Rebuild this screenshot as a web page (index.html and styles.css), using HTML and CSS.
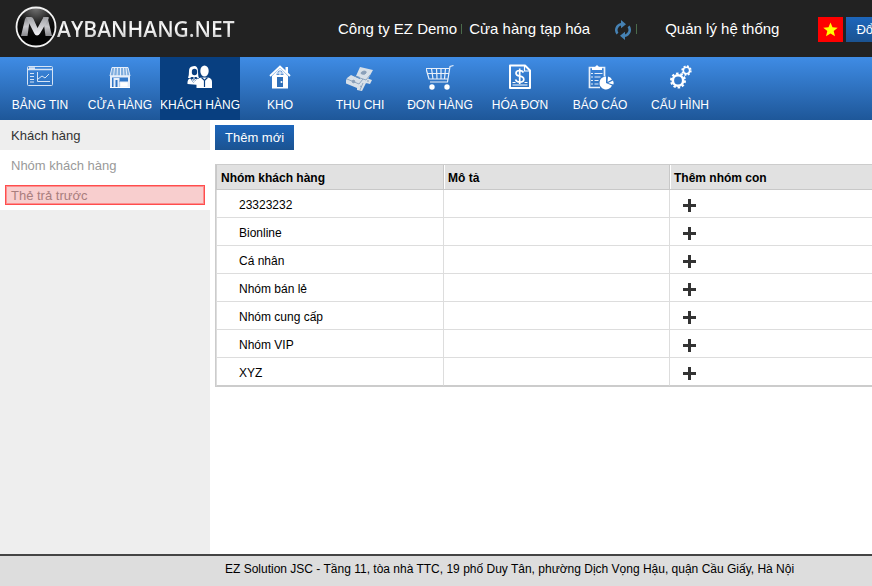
FILE: index.html
```html
<!DOCTYPE html>
<html lang="vi">
<head>
<meta charset="utf-8">
<title>Maybanhang.net - Nhóm khách hàng</title>
<link rel="stylesheet" href="styles.css">
</head>
<body>
<header class="topbar">
  <a class="logo" href="#">
    <svg class="logo-mark" viewBox="0 0 42 42" aria-hidden="true">
      <defs>
        <linearGradient id="silver" x1="0" y1="0" x2="0" y2="1"><stop offset="0" stop-color="#85868a"/><stop offset=".5" stop-color="#c8c8cc"/><stop offset="1" stop-color="#8a8a8e"/></linearGradient>
        <linearGradient id="shine" x1="0" y1="0" x2="0" y2="1"><stop offset="0" stop-color="#a0a1a5"/><stop offset="1" stop-color="#f4f4f8"/></linearGradient>
        <radialGradient id="ball" cx=".5" cy="0" r=".75"><stop offset="0" stop-color="#777"/><stop offset=".6" stop-color="#161616"/><stop offset="1" stop-color="#050505"/></radialGradient>
      </defs>
      <circle cx="21" cy="21" r="19.500" fill="url(#ball)" stroke="#f2f2f2" stroke-width="1.800"/>
      <path d="M6 30 10 13q.5-2 3-2h3l-2 8-1.500 11zM37 30 33 13q-.5-2-3-2h-2l1 8 1.500 11z" fill="url(#silver)"/>
      <path d="M11 11h5q1.500 0 2.500 2l4 9 5-9q1-2 2.500-2h3q1.500 0 .5 2l-8.500 14.500q-1.200 2-3 2-1.700 0-2.700-2z" fill="url(#shine)"/>
    </svg>
    <span class="logo-text">AYBANHANG.NET</span>
  </a>
  <nav class="topnav">
    <a href="#">Công ty EZ Demo</a>
    <span class="bar"></span>
    <a href="#">Cửa hàng tạp hóa</a>
    <button class="refresh" type="button" aria-label="Tải lại">
      <svg viewBox="0 0 18 20" aria-hidden="true" fill="#4682b4"><path d="M3 14.500A7.200 7.200 0 0 1 7.500 3V0l5 4.300-5 4V5.500a4.700 4.700 0 0 0-2.600 7.200Z" transform="translate(-.5 0)"/><path d="M15 5.500A7.200 7.200 0 0 1 10.500 17v3l-5-4.300 5-4v2.800a4.700 4.700 0 0 0 2.600-7.200Z" transform="translate(.5 0)"/></svg>
    </button>
    <span class="bar"></span>
    <a class="admin" href="#">Quản lý hệ thống</a>
    <a class="flag" href="#" aria-label="Tiếng Việt"><svg viewBox="0 0 25 25" aria-hidden="true"><path fill="#ff0" d="m12.500 5.500 2 4.800 5.200.4-4 3.400 1.300 5.100-4.500-2.800L8 19.200l1.300-5.100-4-3.400 5.200-.4z"/></svg></a>
    <button class="btn" type="button">Đổi mật khẩu</button>
  </nav>
</header>

<nav class="menu">
  <a href="#">
    <svg viewBox="0 0 28 28" aria-hidden="true" fill="none" stroke="#d6e4f5"><rect x="1.500" y="3.500" width="25" height="19" rx="1"/><path d="M2 6.500h24M3 5h6" stroke-width="1.500"/><path d="M4 10.500h4M4 13.500h4M4 16.500h4M4 19h4"/><path d="M11.500 9v9.500H24M12 16l4-3 3 2 4-4"/></svg>
    <span>BẢNG TIN</span>
  </a>
  <a href="#">
    <svg viewBox="0 0 28 28" aria-hidden="true" fill="none" stroke="#e6eefa"><path d="M6 4.500h16l2 8.500H4z" fill="#7fadde"/><path d="M8.500 5 7.500 14M11.500 5l-.5 9M14.500 5v9M17.500 5l.5 9M20 5l1 9"/><path d="M4 13.500h20" stroke-width="2"/><path d="M5 14v11M23 14v11M8.500 25v-9h4v9" stroke-width="2"/><path d="M14 19h8v5h-8z" fill="#fff"/><path d="M4 24.500h20" stroke="#fff"/></svg>
    <span>CỬA HÀNG</span>
  </a>
  <a class="active" href="#">
    <svg viewBox="0 0 28 28" aria-hidden="true" fill="#fff"><path d="M6 3.500q6-2 6 5.500 0 4 1 6H2q1-2 1-7 0-4 3-4.500"/><path d="M1.500 21v-2q.5-4 4.500-4h5l2 3v4z"/><ellipse cx="8.500" cy="9" rx="2.700" ry="3.200" fill="#0a3f80"/><path d="m4 15 3.500 5 4-5-1-1h-5z" fill="#0a3f80"/><path d="m6 16 1.500 3L10 16M8 14v6" stroke="#fff" fill="none"/><ellipse cx="18.500" cy="8" rx="4.200" ry="5.500"/><path d="M10.500 25v-6q0-4 5-4.500h6.500q4 .5 4 4.500v6z"/><path d="m15.500 14.500 3 3 3-3M18.500 17v7" stroke="#0a3f80" stroke-width="1.200" fill="none"/></svg>
    <span>KHÁCH HÀNG</span>
  </a>
  <a href="#">
    <svg viewBox="0 0 28 28" aria-hidden="true" fill="#fff"><path d="M6 13 14 5l8 8v12.500H6z"/><path d="M4 13 14 3.500 24 13" fill="none" stroke="#fff" stroke-width="1.800"/><path d="M19.500 4H22v6h-2.500z"/><path d="M11 14h6v10h-6z" fill="#2f6fb8"/><circle cx="15.500" cy="19" r="1"/><path d="m14 6.500 3.500 3.500v2h-7v-2z" fill="#5a91d4"/><path d="M14 6v6M10 10h8" stroke="#fff"/></svg>
    <span>KHO</span>
  </a>
  <a href="#">
    <svg viewBox="0 0 28 28" aria-hidden="true" fill="#d8e0e8"><path d="m14 4 13 3-5 9-12-3zM12 12l14 5-2 4-8-2zM1 15l4-3 11 5 4 3-4 8-5-1v-2L-1 20z"/><path d="m8 13 12 4 4-5M1 16l12 5 4-5M17 20l-3 7" stroke="#7f98b5" stroke-width=".8" fill="none"/><path d="M18 8q3 0 2 2t-4 1 2-3M7 17l2 1-1 2-2-1zM14 23l2 1M22 17v2" fill="#8ba0b9" stroke="#8ba0b9"/></svg>
    <span>THU CHI</span>
  </a>
  <a href="#">
    <svg viewBox="0 0 28 28" aria-hidden="true" fill="none" stroke="#e8f0fa"><path d="M27.500 2.500 24 3.500l-2.500 15.500H4M0 5.500h23M0 5.500 3 16h19M1.500 10.500h21M5.500 5.500 7 16M10.500 5.500 11 16M15 5.500V16M19.500 5.500 18.500 16" stroke-width="1.200"/><circle cx="6" cy="24" r="2.700" fill="#fff" stroke="none"/><circle cx="21" cy="24" r="2.700" fill="#fff" stroke="none"/></svg>
    <span>ĐƠN HÀNG</span>
  </a>
  <a href="#">
    <svg viewBox="0 0 28 28" aria-hidden="true" fill="none" stroke="#fff"><path d="M4 2.500h15l5 5v17.500H4z" stroke-width="2" stroke-linejoin="round"/><path d="M18.500 3v5h5" stroke-width="1.200"/><path d="M17.500 9.500q-1-2-4-2-3.500 0-3.500 2.700 0 2.300 3.800 3 4 .7 4 3.200 0 2.600-4 2.600-3.500 0-4.300-2.500M13.700 5.500v15.500" stroke-width="1.700"/><path d="M6.500 19.500h3M18.500 19.500h3M6.500 22h15"/></svg>
    <span>HÓA ĐƠN</span>
  </a>
  <a href="#">
    <svg viewBox="0 0 28 28" aria-hidden="true" fill="none" stroke="#e6effa"><path d="M14 24.500H3.500v-20h15v9" stroke-width="1.700"/><path d="M6 7V4h3l2-2 2 2h3v3z" fill="#fff" stroke="none"/><path d="M5 10.500h2M5 14h2M5 17.500h2M5 21h2M8.500 10.500h8M8.500 14h6M8.500 17.500h4M8.500 21h4"/><path d="M20 13.500v6.500l6 2.500a6.500 6.500 0 1 1-6-9z" fill="#fff" stroke="none"/><path d="m21.500 19 .5-5.500a6 6 0 0 1 4 3zM22 20l5-2.500q1 2 .3 4z" fill="#fff" stroke="none"/></svg>
    <span>BÁO CÁO</span>
  </a>
  <a href="#">
    <svg viewBox="0 0 28 28" aria-hidden="true" fill="none" stroke="#fff"><circle cx="12" cy="17.500" r="5.200" stroke-width="2.600"/><circle cx="12" cy="17.500" r="7" stroke-width="2" stroke-dasharray="2.500 1.900"/><circle cx="20.500" cy="7.500" r="3.200" stroke-width="1.600"/><circle cx="20.500" cy="7.500" r="4.400" stroke-width="1.600" stroke-dasharray="1.900 1.550"/></svg>
    <span>CẤU HÌNH</span>
  </a>
</nav>

<div class="body">
  <aside class="sidebar">
    <h2>Khách hàng</h2>
    <ul>
      <li><a href="#">Nhóm khách hàng</a></li>
      <li class="marked"><a href="#">Thẻ trả trước</a></li>
    </ul>
  </aside>
  <main class="content">
    <button class="btn" type="button">Thêm mới</button>
    <table>
      <thead><tr><th scope="col">Nhóm khách hàng</th><th scope="col">Mô tả</th><th scope="col">Thêm nhóm con</th></tr></thead>
      <tbody>
        <tr><td>23323232</td><td></td><td><button class="add" type="button" aria-label="Thêm nhóm con"></button></td></tr>
        <tr><td>Bionline</td><td></td><td><button class="add" type="button" aria-label="Thêm nhóm con"></button></td></tr>
        <tr><td>Cá nhân</td><td></td><td><button class="add" type="button" aria-label="Thêm nhóm con"></button></td></tr>
        <tr><td>Nhóm bán lẻ</td><td></td><td><button class="add" type="button" aria-label="Thêm nhóm con"></button></td></tr>
        <tr><td>Nhóm cung cấp</td><td></td><td><button class="add" type="button" aria-label="Thêm nhóm con"></button></td></tr>
        <tr><td>Nhóm VIP</td><td></td><td><button class="add" type="button" aria-label="Thêm nhóm con"></button></td></tr>
        <tr><td>XYZ</td><td></td><td><button class="add" type="button" aria-label="Thêm nhóm con"></button></td></tr>
      </tbody>
    </table>
  </main>
</div>
<footer>EZ Solution JSC - Tầng 11, tòa nhà TTC, 19 phố Duy Tân, phường Dịch Vọng Hậu, quận Cầu Giấy, Hà Nội</footer>
</body>
</html>
```
FILE: styles.css
```css
* { box-sizing: border-box; }
body {
  margin: 0;
  min-height: 100vh;
  display: flex;
  flex-direction: column;
  overflow-x: hidden;
  background: #fff;
  color: #000;
  font: 12px/16px "Liberation Sans", Arial, sans-serif;
}
a { color: inherit; text-decoration: none; }
button { font: inherit; border: 0; padding: 0; cursor: pointer; }

.topbar {
  display: flex;
  align-items: center;
  height: 57px;
  padding-left: 15px;
  background: #222;
  color: #fff;
  overflow: hidden;
}
.logo { display: flex; align-items: center; flex: 0 0 323px; padding-bottom: 3px; }
.logo-mark { width: 42px; height: 42px; }
.logo-text {
  padding-top: 3px;
  font: 600 21px/24px "Open Sans", sans-serif;
  background: linear-gradient(#bbb, #fff 50%, #bbb);
  background-clip: text;
  color: transparent;
}
.topnav { display: flex; align-items: center; flex: none; font-size: 15px; white-space: nowrap; }
.bar { width: 1px; height: 10px; margin: 0 7px 0 4px; background: #4b6b4b; }
.refresh { width: 18px; height: 20px; margin: 2px 0 0 24px; background: none; }
.refresh svg { display: block; }
.admin { margin-left: 21px; }
.flag { width: 25px; height: 25px; margin: 2px 3px 0 39px; background: #f00; }
.flag svg { display: block; }
.btn {
  height: 25px;
  padding: 0 10px;
  background: linear-gradient(#1d66bb, #1b5391);
  color: #fff;
  font-size: 13px;
}
.topnav .btn { margin-top: 2px; }

.menu { display: flex; height: 63px; background: linear-gradient(#3f8ce5, #1e5799); color: #fff; }
.menu a {
  flex: 0 0 80px;
  display: flex;
  flex-direction: column;
  align-items: center;
  gap: 6px;
  padding-top: 6px;
  white-space: nowrap;
}
.menu svg { width: 28px; height: 28px; }
.menu .active { background: #083f80; }

.body { flex: 1; display: flex; }
.sidebar { flex: 0 0 210px; background: #eee; }
.sidebar h2, .sidebar li { padding: 1px 11px 0; font-size: 13px; font-weight: normal; line-height: 29px; }
.sidebar h2 { margin: 0; color: #333; }
.sidebar ul { margin: 0; padding: 0; list-style: none; background: #fff; }
.sidebar li { position: relative; height: 30px; color: #999; }
.sidebar h2, .sidebar li { padding-top: 2px; line-height: 28px; }
.marked::after {
  content: "";
  position: absolute;
  inset: 5px;
  border: 1px solid #ff4d4d;
  box-shadow: inset 0 0 0 1px rgba(255, 80, 80, .5);
  background: rgba(225, 30, 30, .22);
  pointer-events: none;
}

.content { flex: 1; min-width: 0; padding: 5px 0 0 5px; overflow: hidden; }
.content .btn { display: block; }
table {
  width: 100%;
  margin-top: 14px;
  table-layout: fixed;
  border-collapse: separate;
  border-spacing: 0;
  border: 1px solid #ccc;
  border-right: 0;
}
th, td { border-left: 1px solid #ddd; border-bottom: 1px solid #ddd; text-align: left; }
th:nth-child(1) { width: 227px; }
th:nth-child(2) { width: 226px; }
th { height: 25px; padding: 1px 4px 0; background: #e1e1e1; border-color: #c8c8c8; }
th + th { box-shadow: inset 1px 0 #fff; }
td { height: 28px; padding: 2px 4px 0; }
td:first-child { padding-left: 22px; }
td:last-child { padding: 3px 4px 0 13px; }
tbody tr:last-child td { border-bottom-color: #ccc; }
.add {
  display: block;
  width: 13px;
  height: 13px;
  background:
    linear-gradient(#333, #333) center / 13px 3px no-repeat,
    linear-gradient(#333, #333) center / 3px 13px no-repeat;
}

footer { padding: 5px 0 9px 225px; border-top: 2px solid #444; background: #ddd; white-space: nowrap; overflow: hidden; }
```
